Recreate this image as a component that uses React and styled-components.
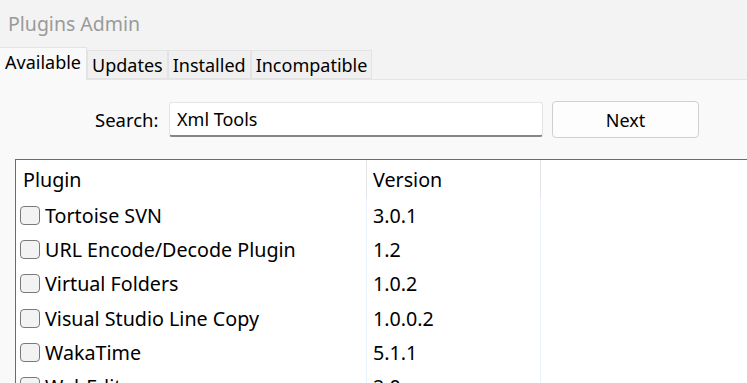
import React from "react";
import styled, { createGlobalStyle } from "styled-components";

const GlobalStyle = createGlobalStyle`
  body {
    margin: 0;
    background: #f9f9f9;
    font-family: "Noto Sans", "Open Sans", sans-serif;
    color: #000;
  }
`;

const Window = styled.div`
  width: 747px;
  height: 383px;
  overflow: hidden;
  background: #f9f9f9;
`;

const TitleBar = styled.div`
  height: 47px;
  display: flex;
  align-items: center;
  padding-left: 8px;
  background: #f3f3f3;
  color: #9a9a9a;
  font-size: 19.5px;
`;

const TabBar = styled.div`
  display: flex;
  align-items: flex-end;
  height: 32px;
  background: #f3f3f3;
  border-bottom: 1px solid #e5e5e5;
`;

const Tab = styled.div`
  display: flex;
  align-items: center;
  box-sizing: border-box;
  height: ${(p) => (p.$active ? "33px" : "29px")};
  margin-bottom: ${(p) => (p.$active ? "-1px" : "0")};
  padding: 0 ${(p) => (p.$active ? "5px" : "4px")} ${(p) => (p.$active ? "4px" : "0")};
  background: ${(p) => (p.$active ? "#f9f9f9" : "#f0f0f0")};
  border: 1px solid #e3e3e3;
  border-bottom: ${(p) => (p.$active ? "none" : "1px solid #e3e3e3")};
  border-left: ${(p) => (p.$first ? "none" : "1px solid #e3e3e3")};
  font-size: 18px;
`;

const SearchRow = styled.div`
  display: flex;
  align-items: center;
  padding: 21px 0 0 95px;
`;

const Label = styled.span`
  width: 74px;
  font-size: 18.5px;
`;

const Input = styled.div`
  box-sizing: border-box;
  width: 374px;
  height: 35px;
  display: flex;
  align-items: center;
  padding-left: 7px;
  background: #fff;
  border: 1px solid #e5e5e5;
  border-bottom: 2px solid #868686;
  border-radius: 3px;
  font-size: 18px;
`;

const Button = styled.div`
  box-sizing: border-box;
  width: 147px;
  height: 37px;
  margin-left: 9px;
  display: flex;
  align-items: center;
  justify-content: center;
  background: #fdfdfd;
  border: 1px solid #d0d0d0;
  border-radius: 4px;
  font-size: 18px;
`;

const Table = styled.div`
  margin: 21px 0 0 15px;
  width: 800px;
  background: #fff;
  border: 1px solid #6b6b6b;
`;

const Row = styled.div`
  display: grid;
  grid-template-columns: 351px 174px 1fr;
  height: ${(p) => (p.$header ? "38px" : "34.3px")};
`;

const Cell = styled.div`
  display: flex;
  align-items: center;
  padding-left: ${(p) => (p.$first ? (p.$header ? "7px" : "4px") : "6px")};
  border-right: 1px solid ${(p) => (p.$header ? "#e5e5e5" : "#eaf1fc")};
  font-size: 19.7px;
  white-space: nowrap;
  overflow: hidden;
`;

const Check = styled.span`
  box-sizing: border-box;
  width: 20px;
  height: 19px;
  margin-right: 5px;
  flex-shrink: 0;
  background: #f3f3f3;
  border: 1px solid #7a7a7a;
  border-radius: 4px;
`;

const tabs = ["Available", "Updates", "Installed", "Incompatible"];

const plugins = [
  ["Tortoise SVN", "3.0.1"],
  ["URL Encode/Decode Plugin", "1.2"],
  ["Virtual Folders", "1.0.2"],
  ["Visual Studio Line Copy", "1.0.0.2"],
  ["WakaTime", "5.1.1"],
  ["WebEdit", "2.0"],
];

const App = () => {
  return (
    <Window>
      <GlobalStyle />
      <TitleBar>Plugins Admin</TitleBar>
      <TabBar>
        {tabs.map((t, i) => (
          <Tab key={t} $active={i === 0} $first={i === 0}>
            {t}
          </Tab>
        ))}
      </TabBar>
      <SearchRow>
        <Label>Search:</Label>
        <Input>Xml Tools</Input>
        <Button>Next</Button>
      </SearchRow>
      <Table>
        <Row $header>
          <Cell $header $first>
            Plugin
          </Cell>
          <Cell $header>Version</Cell>
          <Cell $header />
        </Row>
        {plugins.map(([name, version]) => (
          <Row key={name}>
            <Cell $first>
              <Check />
              {name}
            </Cell>
            <Cell>{version}</Cell>
            <Cell />
          </Row>
        ))}
      </Table>
    </Window>
  );
};

export default App;
